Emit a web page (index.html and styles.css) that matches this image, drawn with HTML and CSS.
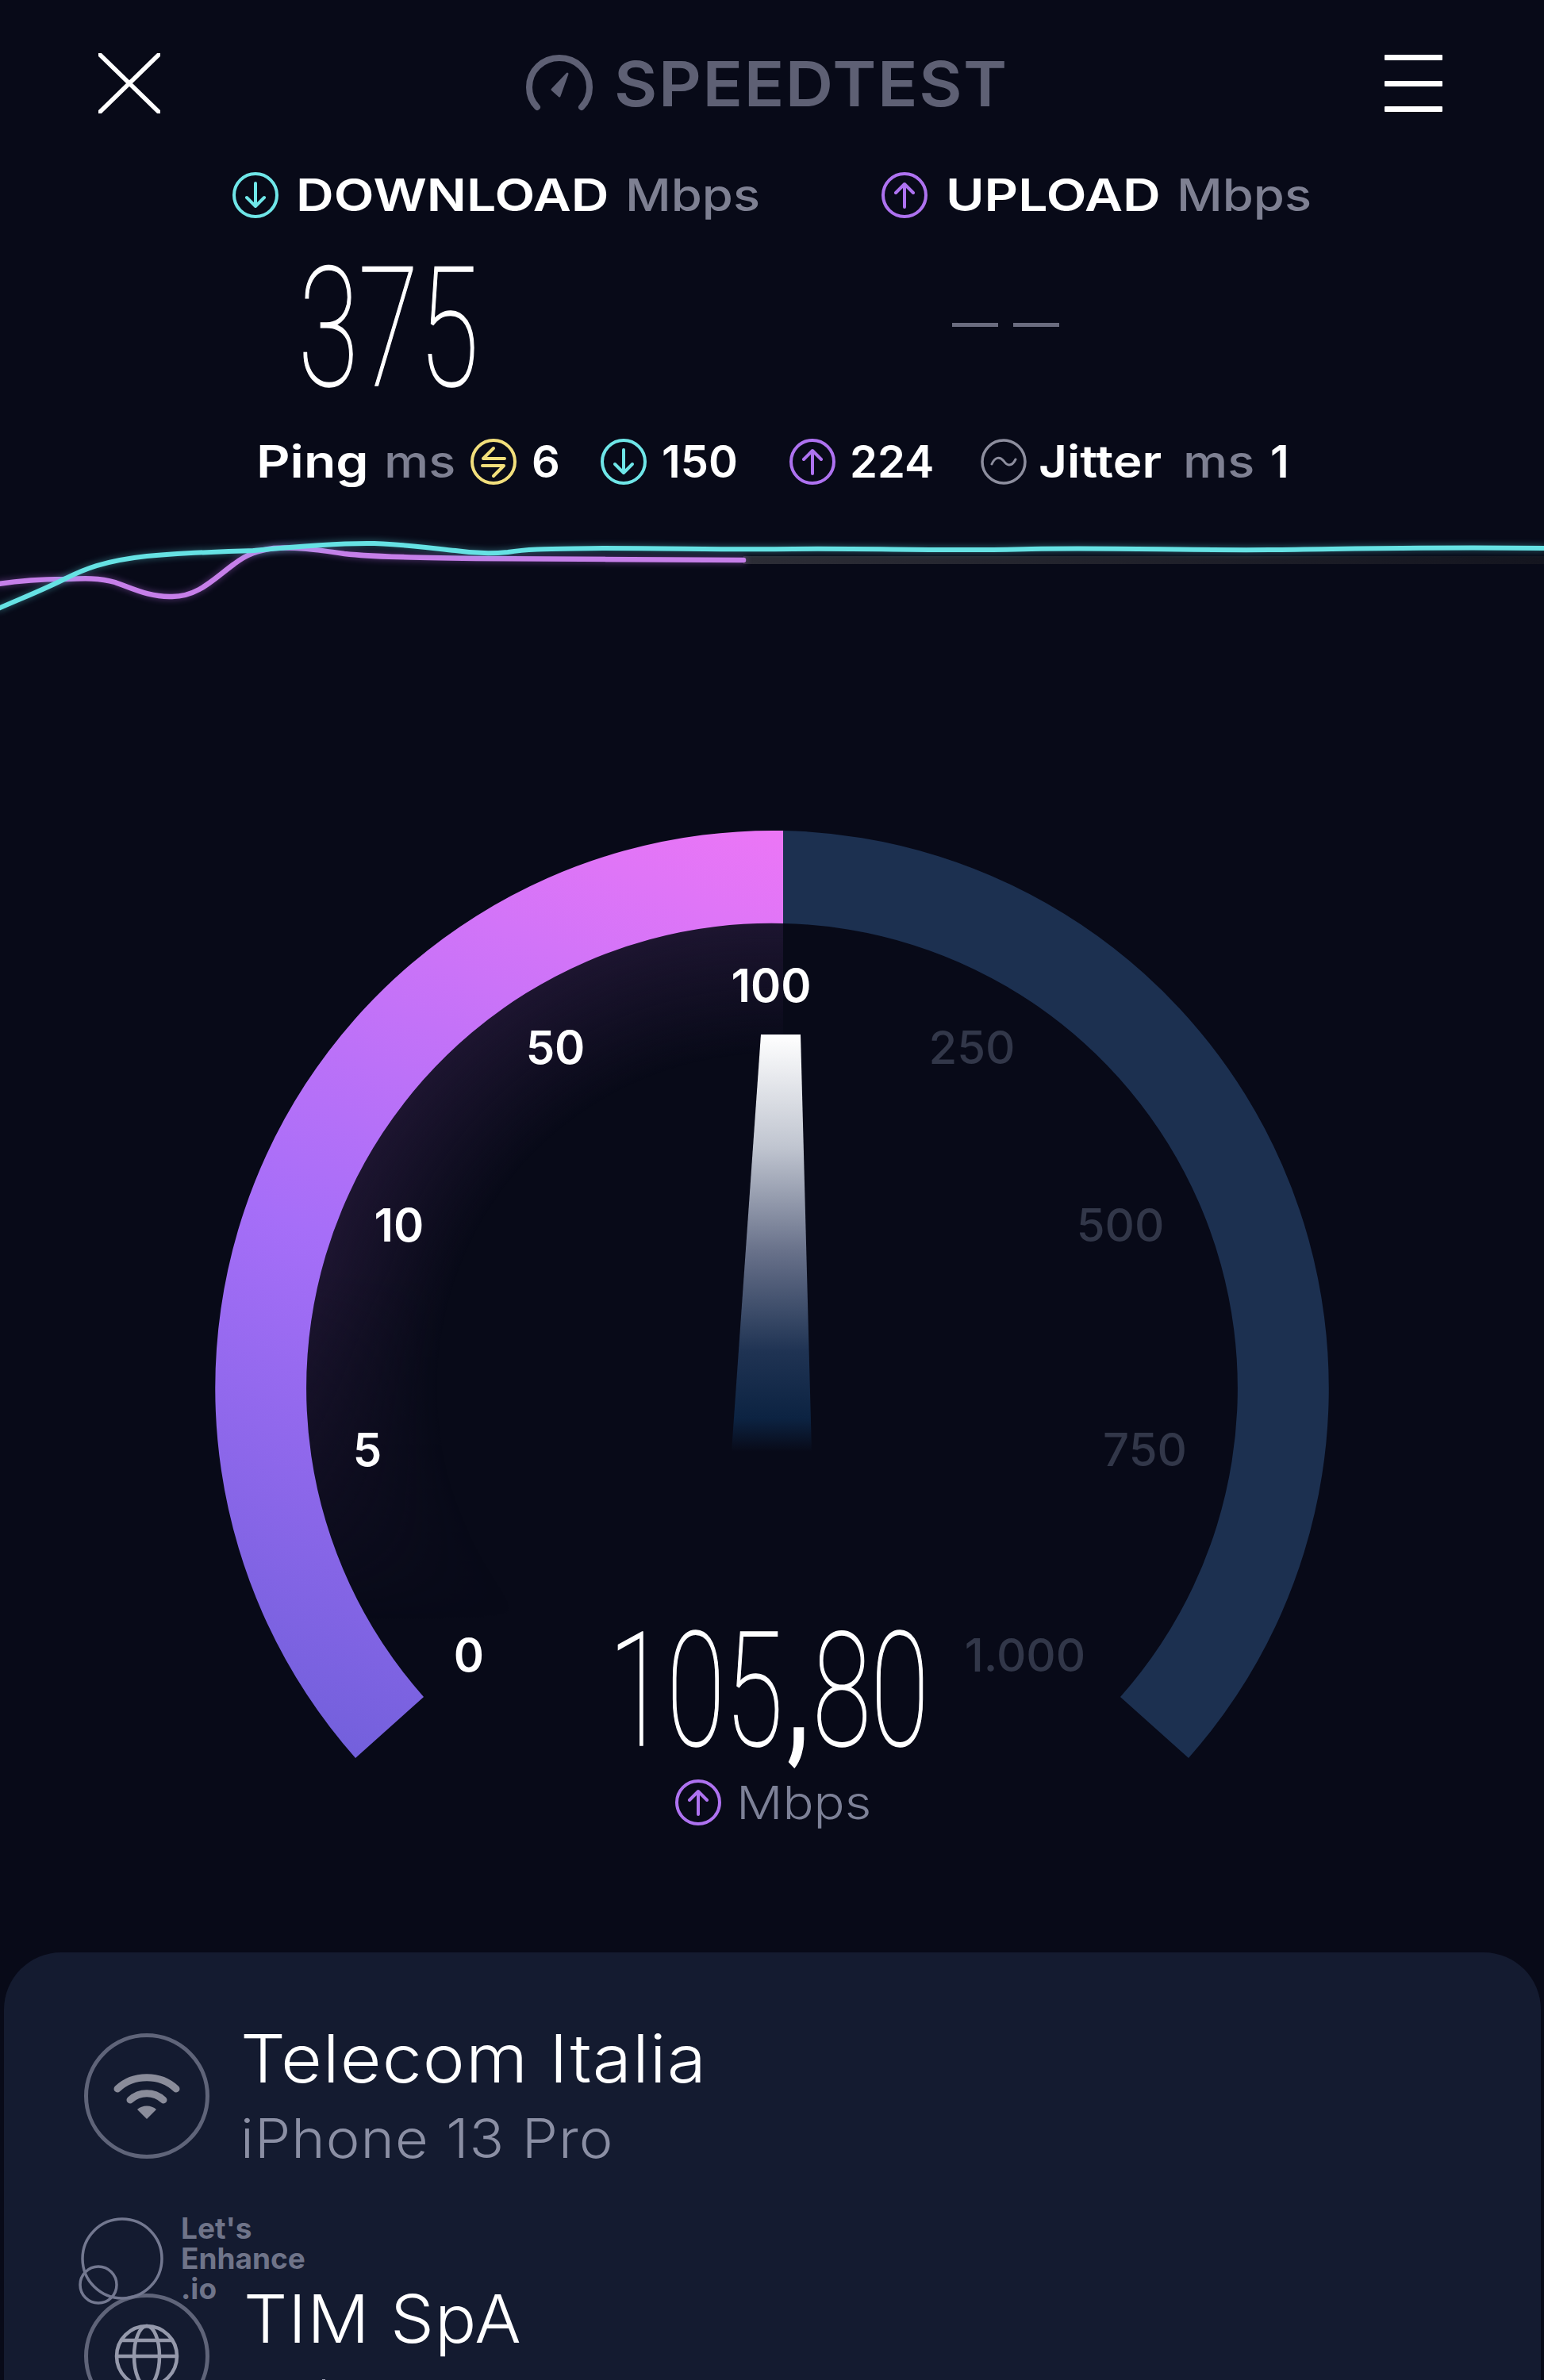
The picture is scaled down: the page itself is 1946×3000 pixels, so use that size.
FILE: index.html
```html
<!DOCTYPE html>
<html lang="en">
<head>
<meta charset="utf-8">
<title>Speedtest</title>
<link rel="stylesheet" href="styles.css">
</head>
<body>
<svg class="defs" width="0" height="0">
  <symbol id="i-down" viewBox="0 0 60 60"><circle cx="30" cy="30" r="27" fill="none" stroke="currentColor" stroke-width="4"/><path d="M30 15V44M19 33L30 44L41 33" fill="none" stroke="currentColor" stroke-width="4" stroke-linecap="round" stroke-linejoin="round"/></symbol>
  <symbol id="i-up" viewBox="0 0 60 60"><circle cx="30" cy="30" r="27" fill="none" stroke="currentColor" stroke-width="4"/><path d="M30 45V16M19 27L30 16L41 27" fill="none" stroke="currentColor" stroke-width="4" stroke-linecap="round" stroke-linejoin="round"/></symbol>
  <symbol id="i-ping" viewBox="0 0 60 60"><circle cx="30" cy="30" r="27" fill="none" stroke="currentColor" stroke-width="4"/><path d="M44 26H17L30 13M16 35H43L30 48" fill="none" stroke="currentColor" stroke-width="4" stroke-linecap="round" stroke-linejoin="round"/></symbol>
  <symbol id="i-jitter" viewBox="0 0 60 60"><circle cx="30" cy="30" r="27" fill="none" stroke="currentColor" stroke-width="3.5"/><path d="M15 33C19 24 25 23 30 29C34 35 40 37 45 27" fill="none" stroke="currentColor" stroke-width="3" stroke-linecap="round"/></symbol>
</svg>
<main class="screen">
  <header class="topbar">
    <svg class="close" viewBox="0 0 78 76"><path d="M2 2L76 74M76 2L2 74" fill="none" stroke="#fff" stroke-width="5.5" stroke-linecap="round"/></svg>
    <div class="brand">
      <svg class="brand-mark" viewBox="0 0 84 72"><path d="M14 66C7 59 4 50 4 41C4 20 21 4 42 4C63 4 80 20 80 41C80 50 77 59 70 66" fill="none" stroke="currentColor" stroke-width="8" stroke-linecap="round"/><path d="M33 44L52 24L42 52Z" fill="currentColor" stroke="currentColor" stroke-width="3" stroke-linejoin="round"/></svg>
      <span class="brand-name">SPEEDTEST</span>
    </div>
    <div class="menu"><span class="menu-bar"></span><span class="menu-bar"></span><span class="menu-bar"></span></div>
  </header>

  <section class="speeds">
    <div class="speed">
      <div class="speed-label label-down"><svg class="ico cyan"><use href="#i-down"/></svg><b class="wide">DOWNLOAD</b><span class="unit">Mbps</span></div>
      <div class="speed-value"><span class="thin big-375">375</span></div>
    </div>
    <div class="speed">
      <div class="speed-label label-up"><svg class="ico violet"><use href="#i-up"/></svg><b class="wide">UPLOAD</b><span class="unit">Mbps</span></div>
      <div class="speed-value dashes"><span class="dash"></span><span class="dash"></span></div>
    </div>
  </section>

  <section class="stats">
    <b class="wide">Ping</b><span class="unit">ms</span>
    <svg class="ico yellow"><use href="#i-ping"/></svg><b>6</b>
    <svg class="ico cyan"><use href="#i-down"/></svg><b>150</b>
    <svg class="ico violet"><use href="#i-up"/></svg><b>224</b>
    <svg class="ico grey"><use href="#i-jitter"/></svg><b class="wide-s">Jitter</b><span class="unit">ms</span><b>1</b>
  </section>

  <svg class="graph" viewBox="0 660 1946 120">
    <defs><linearGradient id="track" x1="0" x2="1" y1="0" y2="0"><stop offset="0" stop-color="#2c2d36"/><stop offset="1" stop-color="#14151f"/></linearGradient></defs>
    <rect x="937" y="700" width="1009" height="10" fill="url(#track)"/>
    <path class="line line-violet" d="M-2 735C25 731 45 729 80 729C105 728 125 727 145 733C170 742 190 752 217 751C250 751 270 728 295 710C312 697 325 693 345 690C370 688 400 692 434 697C470 701 520 702 600 703C700 704 800 705 937 705"/>
    <path class="line line-cyan" d="M-2 766C30 752 60 740 83 728C105 717 130 706 185 700C240 695 290 694 319 693C350 690 420 683 472 684C510 685 545 690 574 693C600 697 620 697 640 695C670 690 700 691 760 690C860 690 900 692 1000 691C1100 690 1200 694 1300 691C1400 689 1500 693 1600 692C1700 691 1800 688 1946 690"/>
  </svg>

  <section class="gauge">
    <svg class="dial" viewBox="0 780 1946 1680">
      <defs>
        <linearGradient id="arc" gradientUnits="userSpaceOnUse" x1="450" y1="2215" x2="987" y2="1046">
          <stop offset="0" stop-color="#7360dc"/><stop offset=".45" stop-color="#a66ef8"/><stop offset=".8" stop-color="#d274f8"/><stop offset="1" stop-color="#ec76f6"/>
        </linearGradient>
        <radialGradient id="halo" gradientUnits="userSpaceOnUse" cx="973" cy="1749" r="586">
          <stop offset=".72" stop-color="#1d1530" stop-opacity="0"/><stop offset="1" stop-color="#1d1530"/>
        </radialGradient>
        <linearGradient id="halofade" gradientUnits="userSpaceOnUse" x1="0" y1="1600" x2="0" y2="2040"><stop offset="0" stop-color="#fff"/><stop offset="1" stop-color="#000"/></linearGradient>
        <mask id="halomask" maskUnits="userSpaceOnUse" x="0" y="780" width="1946" height="1680"><rect x="0" y="780" width="1946" height="1680" fill="url(#halofade)"/></mask>
        <linearGradient id="needle" x1="0" x2="0" y1="0" y2="1">
          <stop offset="0" stop-color="#fff"/><stop offset=".27" stop-color="#c0c5d0"/><stop offset=".52" stop-color="#68718a"/><stop offset=".76" stop-color="#1f3353"/><stop offset=".92" stop-color="#0c2342"/><stop offset="1" stop-color="#080a18"/>
        </linearGradient>
      </defs>
      <path d="M534 2138A586 586 0 0 1 987 1163V1749H973Z" fill="url(#halo)" mask="url(#halomask)"/>
      <path d="M448 2215A703 703 0 0 1 987 1046V1163A586 586 0 0 0 534 2138Z" fill="url(#arc)"/>
      <path d="M987 1046A703 703 0 0 1 1498 2215L1412 2138A586 586 0 0 0 987 1163Z" fill="#1c3050"/>
      <path d="M959 1303H1009L1023 1829H922Z" fill="url(#needle)"/>
      <g class="tick on">
        <text x="591" y="2106">0</text><text x="463" y="1847">5</text><text x="503" y="1564">10</text><text x="700" y="1340">50</text><text x="972" y="1262">100</text>
      </g>
      <g class="tick off">
        <text x="1225" y="1340">250</text><text x="1412" y="1564">500</text><text x="1443" y="1847">750</text><text x="1292" y="2106">1.000</text>
      </g>
    </svg>
    <div class="readout">
      <div class="readout-value"><span class="thin big-now">105<span class="comma">,</span>80</span></div>
      <div class="readout-unit"><svg class="ico violet"><use href="#i-up"/></svg><span class="unit-thin">Mbps</span></div>
    </div>
  </section>

  <section class="card">
    <div class="row">
      <span class="badge">
        <svg class="badge-icon" viewBox="0 0 84 60"><path d="M5 21C25 2 59 2 79 21" fill="none" stroke="#8a8c9a" stroke-width="9" stroke-linecap="round"/><path d="M21 35C33 24 51 24 63 35" fill="none" stroke="#8a8c9a" stroke-width="9" stroke-linecap="round"/><path d="M30 47C36 41 48 41 54 47L42 59Z" fill="#8a8c9a"/></svg>
      </span>
      <div class="row-text"><div class="row-title">Telecom Italia</div><div class="row-sub">iPhone 13 Pro</div></div>
    </div>
    <div class="row row-second">
      <span class="badge">
        <svg class="badge-icon globe" viewBox="0 0 84 84"><g fill="none" stroke="#9599ab" stroke-width="4.5"><circle cx="42" cy="42" r="38"/><ellipse cx="42" cy="42" rx="16" ry="38"/><path d="M4 42H80M10 22H74"/></g></svg>
      </span>
      <div class="row-text"><div class="row-title short">TIM SpA</div><span class="row-cut"></span></div>
    </div>
    <div class="watermark">
      <svg class="wm-mark" viewBox="0 0 110 112"><g fill="none" stroke="#737890" stroke-width="3.5"><circle cx="56" cy="51" r="50"/><circle cx="26" cy="84" r="23"/></g></svg>
      <div class="wm-text">Let's<br>Enhance<br>.io</div>
    </div>
  </section>
</main>
</body>
</html>
```

FILE: styles.css
```css
* { box-sizing: border-box; }
html, body { margin: 0; padding: 0; background: #080a18; }
body { font-family: Inter, "Noto Sans", sans-serif; color: #fff; }
.defs { position: absolute; }
.screen { width: 1946px; height: 3000px; overflow: hidden; display: flex; flex-direction: column; background: #080a18; }

.topbar { display: grid; grid-template-columns: 78px 1fr 73px; align-items: center; height: 76px; margin-top: 67px; padding: 0 128px 0 124px; }
.close { width: 78px; height: 76px; }
.brand { display: flex; align-items: center; justify-content: center; gap: 27px; color: #5e6074; transform: translateX(-20px); }
.brand-mark { width: 84px; height: 72px; }
.brand-name { font-size: 79px; font-weight: 600; letter-spacing: 1.5px; line-height: 76px; transform: scaleX(1.058); transform-origin: 0 50%; }
.menu { display: flex; flex-direction: column; justify-content: space-between; height: 76px; padding: 2px 0; }
.menu-bar { display: block; height: 7px; background: #fff; border-radius: 1px; }

.ico { width: 60px; height: 60px; flex: none; }
.cyan { color: #6fe6e8; }
.violet { color: #ae72f0; }
.yellow { color: #f2df7c; }
.grey { color: #8d8e9e; }
b { font-weight: 600; }
.wide, .wide-s, .unit { display: block; transform-origin: 0 50%; white-space: nowrap; }
.wide { transform: scaleX(1.18); }
.wide-s { transform: scaleX(1.11); }
.unit { color: #7e8092; font-weight: 500; transform: scaleX(1.13); }

.speeds { display: grid; grid-template-columns: 818px 1fr; padding-left: 292px; margin-top: 69px; }
.speed-label { display: grid; align-items: center; font-size: 56px; height: 60px; white-space: nowrap; }
.label-down { grid-template-columns: 81px 415px 1fr; }
.label-up { grid-template-columns: 82px 291px 1fr; }
.speed-value { height: 258px; padding-top: 57px; }
.thin { display: inline-block; font-family: Roboto, sans-serif; font-weight: 100; transform-origin: 0 0; white-space: nowrap; }
.big-375 { font-size: 210px; line-height: 170px; margin-left: 84px; transform: scaleX(.66); -webkit-text-stroke: 1.5px #fff; }
.dashes { display: flex; gap: 19px; align-items: flex-start; padding: 135px 0 0 90px; }
.dash { width: 58px; height: 5px; background: #6a6c7f; }

.stats { display: grid; grid-template-columns: 161px 108px 78px 86px 78px 160px 77px 164px 74px 182px 110px auto; align-items: center; height: 60px; padding-left: 323px; font-size: 56px; white-space: nowrap; margin-top: 18px; }

.graph { display: block; width: 1946px; height: 120px; margin-top: 53px; flex: none; }
.line { fill: none; stroke-linecap: round; stroke-width: 6.5px; }
.line-violet { stroke: #c67fe9; filter: drop-shadow(0 0 4px rgba(190, 110, 240, .45)); }
.line-cyan { stroke: #66e2e4; stroke-width: 6px; filter: drop-shadow(0 0 4px rgba(90, 220, 230, .45)); }

.gauge { position: relative; height: 1680px; flex: none; }
.dial { position: absolute; inset: 0; width: 1946px; height: 1680px; }
.tick text { font-family: Inter, sans-serif; font-size: 58px; text-anchor: middle; }
.tick.on text { fill: #fff; font-weight: 600; }
.tick.off text { fill: #323749; font-weight: 500; }
.readout { position: relative; display: flex; flex-direction: column; padding-top: 1258px; }
.readout-value { height: 186px; padding-left: 767px; }
.big-now { font-size: 200px; line-height: 186px; transform: scaleX(.67); -webkit-text-stroke: 1.5px #fff; }
.comma { font-weight: 400; margin: 0 8px; }
.readout-unit { display: grid; grid-template-columns: 78px auto; align-items: center; padding-left: 850px; height: 60px; margin-top: 12px; font-size: 58px; color: #7d8197; font-weight: 300; }
.unit-thin { display: block; transform: scaleX(1.12); transform-origin: 0 50%; }

.card { position: relative; flex: 1; margin: 0 4px 0 5px; padding: 102px 0 0 101px; background: #141b30; border-radius: 72px 72px 0 0; }
.row { display: flex; gap: 39px; height: 158px; }
.row-second { margin-top: 170px; }
.badge { display: flex; align-items: center; justify-content: center; width: 158px; height: 158px; border: 5px solid #5f6479; border-radius: 50%; flex: none; }
.badge-icon { width: 84px; height: 60px; }
.badge-icon.globe { width: 84px; height: 84px; }
.row-title { font-size: 84px; font-weight: 300; line-height: 84px; letter-spacing: 1px; white-space: nowrap; margin-top: -10px; transform: scaleX(1.065); transform-origin: 0 50%; }
.row-title.short { transform: scaleX(1.035); }
.row-sub { font-size: 68px; font-weight: 300; line-height: 76px; color: #8b8fa4; margin-top: 20px; letter-spacing: 1px; white-space: nowrap; transform: scaleX(1.06); transform-origin: 0 50%; }
.row-second .row-text { padding-left: 4px; }
.row-cut { display: block; width: 4px; height: 4px; margin: 34px 0 0 99px; background: #9a9db0; }
.watermark { position: absolute; left: 93px; top: 335px; display: flex; gap: 20px; }
.wm-mark { width: 110px; height: 112px; overflow: visible; }
.wm-text { font-size: 37px; font-weight: 700; line-height: 38px; color: #6f7489; margin-top: -6px; }
```
